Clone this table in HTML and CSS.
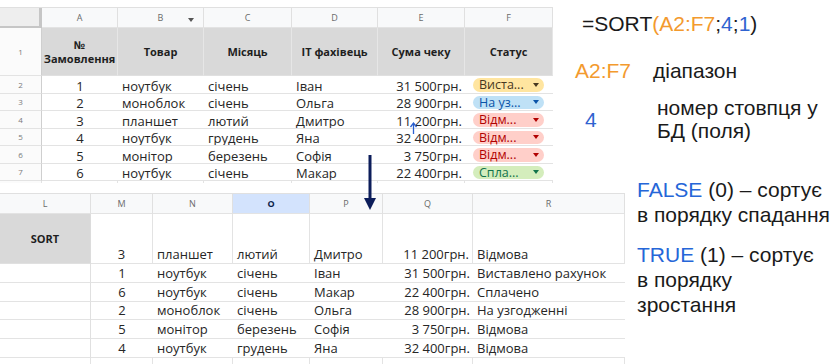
FILE: index.html
```html
<!DOCTYPE html>
<html lang="uk">
<head>
<meta charset="utf-8">
<title>SORT</title>
<link rel="stylesheet" href="styles.css">
</head>
<body>
<div class="page">
  <div class="row row-top">
    <div class="sheet sheet-top">
      <div class="c corner"></div>
      <div class="c colh">A</div>
      <div class="c colh colh-filter">B</div>
      <div class="c colh">C</div>
      <div class="c colh">D</div>
      <div class="c colh">E</div>
      <div class="c colh">F</div>

      <div class="c rown rown-mid">1</div>
      <div class="c hdr hdr-two"><span>№</span><span>Замовлення</span></div>
      <div class="c hdr">Товар</div>
      <div class="c hdr">Місяць</div>
      <div class="c hdr">ІТ фахівець</div>
      <div class="c hdr">Сума чеку</div>
      <div class="c hdr">Статус</div>

      <div class="c rown">2</div>
      <div class="c d ctr">1</div><div class="c d">ноутбук</div><div class="c d">січень</div><div class="c d">Іван</div><div class="c d rt">31 500грн.</div>
      <div class="c st"><span class="chip chip-yellow">Виста...<i class="tri"></i></span></div>

      <div class="c rown">3</div>
      <div class="c d ctr">2</div><div class="c d">моноблок</div><div class="c d">січень</div><div class="c d">Ольга</div><div class="c d rt">28 900грн.</div>
      <div class="c st"><span class="chip chip-blue">На уз...<i class="tri"></i></span></div>

      <div class="c rown">4</div>
      <div class="c d ctr">3</div><div class="c d">планшет</div><div class="c d">лютий</div><div class="c d">Дмитро</div><div class="c d rt">11 200грн.</div>
      <div class="c st"><span class="chip chip-red">Відм...<i class="tri"></i></span></div>

      <div class="c rown">5</div>
      <div class="c d ctr">4</div><div class="c d">ноутбук</div><div class="c d">грудень</div><div class="c d">Яна</div><div class="c d rt">32 400грн.</div>
      <div class="c st"><span class="chip chip-red">Відм...<i class="tri"></i></span></div>

      <div class="c rown">6</div>
      <div class="c d ctr">5</div><div class="c d">монітор</div><div class="c d">березень</div><div class="c d">Софія</div><div class="c d rt">3 750грн.</div>
      <div class="c st"><span class="chip chip-red">Відм...<i class="tri"></i></span></div>

      <div class="c rown">7</div>
      <div class="c d ctr">6</div><div class="c d">ноутбук</div><div class="c d">січень</div><div class="c d">Макар</div><div class="c d rt">22 400грн.</div>
      <div class="c st"><span class="chip chip-green">Спла...<i class="tri"></i></span></div>

      <div class="c tail rown"></div>
      <div class="c tail"></div><div class="c tail"></div><div class="c tail"></div><div class="c tail"></div><div class="c tail"></div><div class="c tail"></div>
    </div>

    <div class="notes notes-top">
      <div class="formula">=SORT<span class="or">(A2:F7</span>;<span class="bl">4</span>;<span class="bl">1</span>)</div>
      <div class="def def-range"><span class="key or">A2:F7</span><span class="val">діапазон</span></div>
      <div class="def def-col"><span class="key bl">4</span><span class="val">номер стовпця у<br>БД (поля)</span></div>
    </div>
  </div>

  <div class="row row-bottom">
    <div class="sheet sheet-bottom">
      <div class="c colh">L</div>
      <div class="c colh">M</div>
      <div class="c colh">N</div>
      <div class="c colh colh-sel">O</div>
      <div class="c colh">P</div>
      <div class="c colh">Q</div>
      <div class="c colh">R</div>

      <div class="c hdr hdr-sort">SORT</div>
      <div class="c d ctr first">3</div><div class="c d first">планшет</div><div class="c d first">лютий</div><div class="c d first">Дмитро</div><div class="c d rt first">11 200грн.</div><div class="c d first">Відмова</div>

      <div class="c lcol"></div>
      <div class="c d ctr">1</div><div class="c d">ноутбук</div><div class="c d">січень</div><div class="c d">Іван</div><div class="c d rt">31 500грн.</div><div class="c d">Виставлено рахунок</div>

      <div class="c lcol"></div>
      <div class="c d ctr">6</div><div class="c d">ноутбук</div><div class="c d">січень</div><div class="c d">Макар</div><div class="c d rt">22 400грн.</div><div class="c d">Сплачено</div>

      <div class="c lcol"></div>
      <div class="c d ctr">2</div><div class="c d">моноблок</div><div class="c d">січень</div><div class="c d">Ольга</div><div class="c d rt">28 900грн.</div><div class="c d">На узгодженні</div>

      <div class="c lcol"></div>
      <div class="c d ctr">5</div><div class="c d">монітор</div><div class="c d">березень</div><div class="c d">Софія</div><div class="c d rt">3 750грн.</div><div class="c d">Відмова</div>

      <div class="c lcol"></div>
      <div class="c d ctr">4</div><div class="c d">ноутбук</div><div class="c d">грудень</div><div class="c d">Яна</div><div class="c d rt">32 400грн.</div><div class="c d">Відмова</div>

      <div class="c tail"></div><div class="c tail"></div><div class="c tail"></div><div class="c tail"></div><div class="c tail"></div><div class="c tail"></div><div class="c tail"></div>
    </div>

    <div class="notes notes-bottom">
      <p class="note"><span class="bl2">FALSE</span> (0) – сортує<br>в порядку спадання</p>
      <p class="note"><span class="bl2">TRUE</span> (1) – сортує<br>в порядку<br>зростання</p>
    </div>
  </div>

  <svg class="arrow-down" width="16" height="58" viewBox="0 0 16 58" aria-hidden="true">
    <line x1="8" y1="1" x2="8" y2="46" stroke="#0c1d5a" stroke-width="3"/>
    <polygon points="2,44 14,44 8,56" fill="#0c1d5a"/>
  </svg>
  <svg class="cursor-arrow" width="9" height="14" viewBox="0 0 9 14" aria-hidden="true">
    <line x1="4.5" y1="2.5" x2="4.5" y2="13" stroke="#2a5fd0" stroke-width="1.3"/>
    <polyline points="1.5,6 4.5,2 7.5,6" fill="none" stroke="#2a5fd0" stroke-width="1.3"/>
  </svg>
</div>
</body>
</html>
```

FILE: styles.css
```css
html, body {
  margin: 0;
  padding: 0;
  background: #ffffff;
}
body {
  width: 831px;
  height: 364px;
  overflow: hidden;
}
.page {
  position: relative;
  width: 831px;
  height: 364px;
  overflow: hidden;
}
.row {
  display: flex;
  align-items: flex-start;
}
.row-top {
  height: 193px;
}

/* ---------- sheets ---------- */
.sheet {
  display: grid;
  border-top: 1px solid #e0e0e0;
  font-family: "Open Sans", "DejaVu Sans", sans-serif;
  color: #262626;
}
.sheet-top {
  margin-top: 7px;
  grid-template-columns: 42px 76px 86px 88px 86px 87px 88px;
  grid-template-rows: 20px 48px repeat(6, 17.5px) 2px;
}
.sheet-bottom {
  grid-template-columns: 91px 62px 80px 77px 73px 90px 152px;
  grid-template-rows: 20px 50px repeat(5, 18.8px) 12px;
}
.c {
  box-sizing: border-box;
  border-bottom: 1px solid #e3e3e3;
  overflow: hidden;
  white-space: nowrap;
  min-width: 0;
}
.corner {
  background: #eeeeee;
  border-right: 3px solid #c6c6c6;
  border-bottom: 2px solid #c6c6c6;
}
.colh {
  position: relative;
  display: flex;
  align-items: center;
  justify-content: center;
  background: #f8f9fa;
  border-right: 1px solid #e0e0e0;
  font-size: 9px;
  color: #6b6b6b;
}
.colh-filter::after {
  content: "";
  position: absolute;
  right: 9px;
  top: 10px;
  border-left: 3.5px solid transparent;
  border-right: 3.5px solid transparent;
  border-top: 4px solid #555555;
}
.colh-sel {
  background: #d3e3fd;
  color: #0b1f4a;
  font-weight: 700;
}
.rown {
  display: flex;
  align-items: center;
  justify-content: center;
  background: #fbfbfb;
  border-right: 1px solid #cfcfcf;
  font-size: 8px;
  color: #7a7a7a;
}
.hdr {
  display: flex;
  align-items: center;
  justify-content: center;
  text-align: center;
  background: #d9d9d9;
  border-right: 1px solid #e6e6e6;
  border-bottom-color: #e0e0e0;
  font-size: 11px;
  line-height: 14px;
  font-weight: 700;
  color: #1f1f1f;
}
.hdr-two {
  flex-direction: column;
  gap: 0;
}
.hdr-two span {
  display: block;
  line-height: 14px;
}
.hdr-sort {
  border-right-color: #dcdcdc;
}
.d {
  display: flex;
  align-items: flex-end;
  padding: 0 3px 0 4px;
  font-size: 13px;
  line-height: 14px;
}
.sheet-bottom .d {
  padding-bottom: 2px;
}
.d.ctr {
  justify-content: center;
  padding-left: 0;
  padding-right: 0;
}
.d.rt {
  justify-content: flex-end;
}
.d.first {
  border-right: 1px solid #e3e3e3;
}
.lcol {
  border-right: 1px solid #e0e0e0;
}
.tail {
  border-bottom: none;
  border-right: 1px solid #e3e3e3;
}

/* ---------- status chips ---------- */
.st {
  display: flex;
  padding: 2px 9px 2px 8px;
}
.chip {
  flex: 1;
  display: flex;
  align-items: center;
  justify-content: space-between;
  height: 13.5px;
  border-radius: 7px;
  padding: 0 5px 0 6px;
  font-size: 12.5px;
  line-height: 13px;
}
.tri {
  width: 0;
  height: 0;
  border-left: 3.5px solid transparent;
  border-right: 3.5px solid transparent;
  border-top: 4px solid currentColor;
}
.chip-yellow { background: #ffe5a0; color: #473821; }
.chip-blue   { background: #bfe1f6; color: #0a53a8; }
.chip-red    { background: #ffcfc9; color: #b10202; }
.chip-green  { background: #d4edbc; color: #11734b; }

/* ---------- notes ---------- */
.notes {
  font-family: "Liberation Sans", Arial, sans-serif;
  color: #1a1a1a;
  font-size: 21px;
}
.notes-top {
  margin-top: 12px;
  padding-left: 22px;
}
.formula {
  font-size: 21px;
  line-height: 24px;
  padding-left: 7px;
}
.or { color: #f39a2e; }
.bl { color: #2f63d0; }
.bl2 { color: #2566d8; }
.def {
  display: flex;
  align-items: center;
}
.def-range {
  margin-top: 23px;
  line-height: 24px;
}
.def-range .key {
  width: 78px;
}
.def-col {
  margin-top: 13px;
  line-height: 23px;
}
.def-col .key {
  box-sizing: border-box;
  width: 82px;
  padding-left: 10px;
}
.notes-bottom {
  margin-top: -16px;
  margin-left: 12px;
}
.note {
  margin: 0;
  line-height: 25px;
}
.note + .note {
  margin-top: 15px;
}

/* ---------- overlays ---------- */
.arrow-down {
  position: absolute;
  left: 362px;
  top: 154px;
}
.cursor-arrow {
  position: absolute;
  left: 409px;
  top: 121px;
}
```
